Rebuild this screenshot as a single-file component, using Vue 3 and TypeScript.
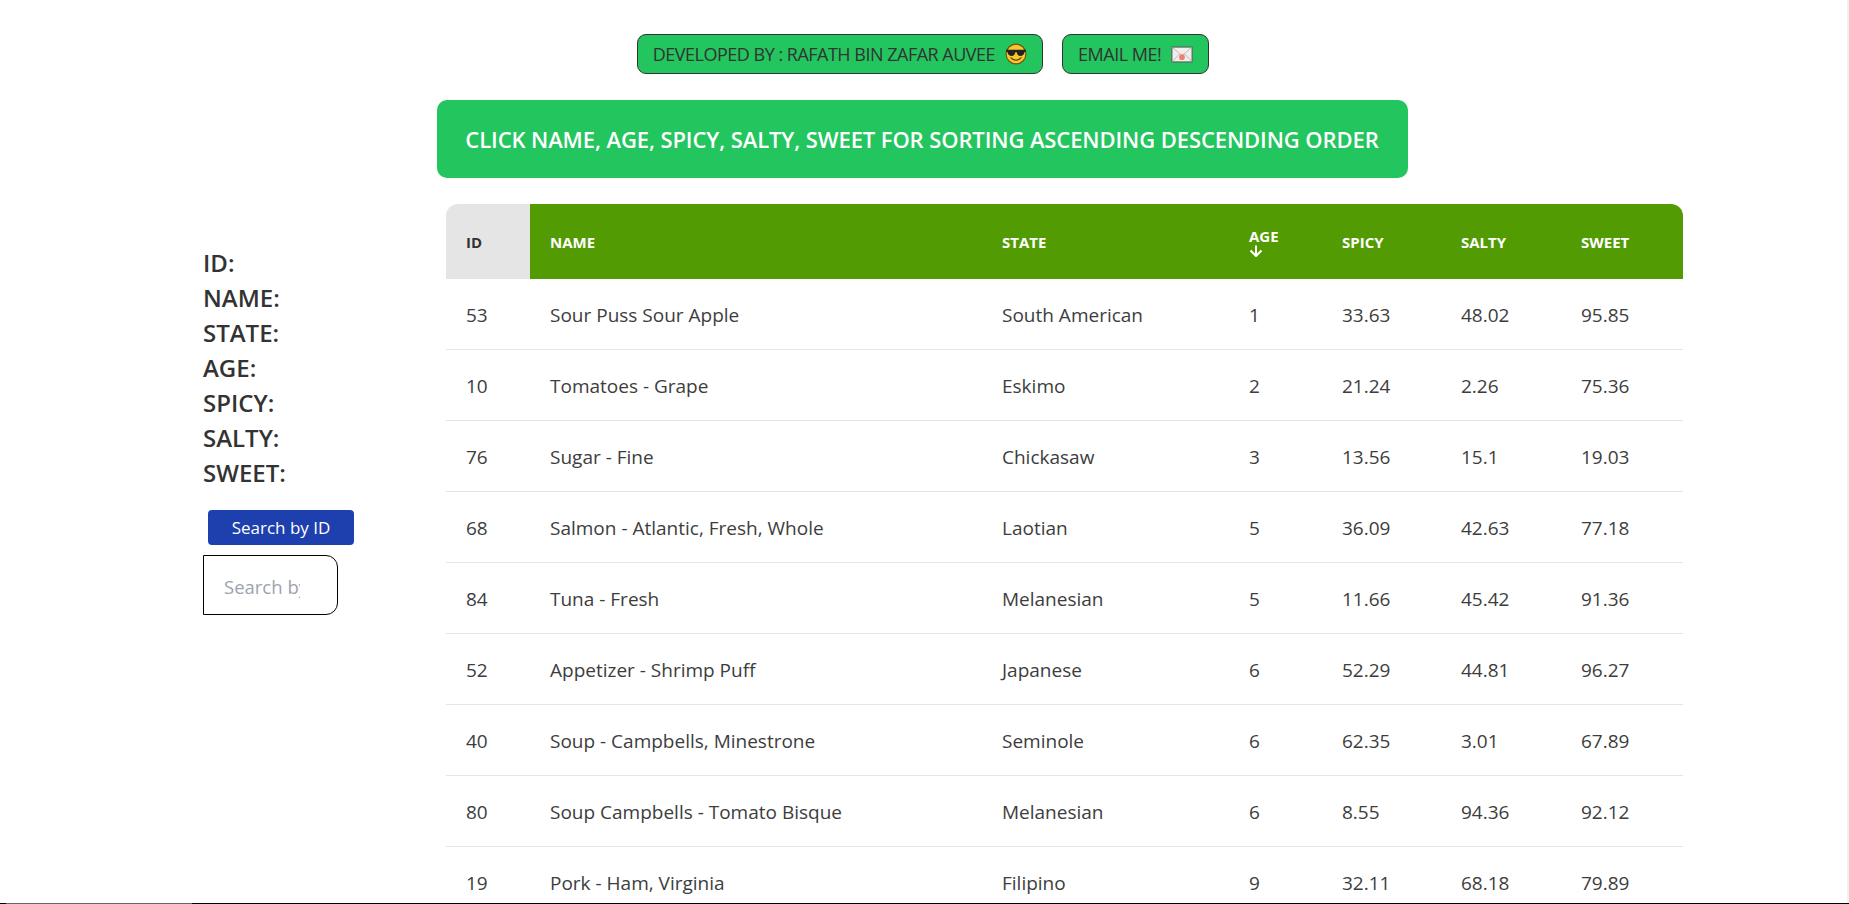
<template>
  <div class="page">
    <div class="top-links">
      <button class="link-btn">
        DEVELOPED BY : RAFATH BIN ZAFAR AUVEE
        <svg class="emoji" viewBox="0 0 20 20">
          <circle cx="10" cy="10" r="9" fill="#f9c62b" stroke="#6b5312" stroke-width="1" />
          <path d="M1 6.200h18v1.600l-1.200.4c-.4 2.600-2 3.600-3.800 3.600-2 0-3-1.400-3.400-3.400h-1.200C9 10.400 8 11.800 6 11.800c-1.800 0-3.400-1-3.800-3.600L1 7.800z" fill="#222" />
          <path d="M5.500 13.500c2.500 2.800 6.500 2.800 9 0" fill="none" stroke="#5a4510" stroke-width="1.200" stroke-linecap="round" />
        </svg>
      </button>
      <button class="link-btn">
        EMAIL ME!
        <svg class="emoji mail" viewBox="0 0 20 16">
          <rect x="0.500" y="1" width="19" height="14" fill="#f1efec" stroke="#5b5b5b" />
          <path d="M1 1.500l9 7.500 9-7.500M1 14.500l6.500-7M19 14.500l-6.500-7" fill="none" stroke="#b9b9b9" stroke-width="0.900" />
          <circle cx="10" cy="10.500" r="2.700" fill="#ef7f75" />
        </svg>
      </button>
    </div>

    <div class="banner-row">
      <div class="banner">CLICK NAME, AGE, SPICY, SALTY, SWEET FOR SORTING ASCENDING DESCENDING ORDER</div>
    </div>

    <div class="main">
      <aside class="side">
        <div class="labels">
          <div v-for="label in labels" :key="label">{{ label }}:</div>
        </div>
        <button class="search-btn">Search by ID</button>
        <input class="search-input" type="text" placeholder="Search by ID" />
      </aside>

      <table class="grid">
        <colgroup>
          <col v-for="w in colWidths" :key="w" :style="{ width: w + 'px' }" />
        </colgroup>
        <thead>
          <tr>
            <th class="th-id">ID</th>
            <th>NAME</th>
            <th>STATE</th>
            <th>
              AGE
              <svg class="sort-arrow" viewBox="0 0 14 12">
                <path d="M7 0.500v10.500M1.500 5.500L7 11l5.500-5.500" fill="none" stroke="#fff" stroke-width="2" />
              </svg>
            </th>
            <th>SPICY</th>
            <th>SALTY</th>
            <th>SWEET</th>
          </tr>
        </thead>
        <tbody>
          <tr v-for="row in rows" :key="row.id">
            <td>{{ row.id }}</td>
            <td>{{ row.name }}</td>
            <td>{{ row.state }}</td>
            <td>{{ row.age }}</td>
            <td>{{ row.spicy }}</td>
            <td>{{ row.salty }}</td>
            <td>{{ row.sweet }}</td>
          </tr>
        </tbody>
      </table>
    </div>

    <!-- window edge visible in the capture -->
    <div class="edge-right" />
    <div class="edge-bottom">
      <span class="edge-a" />
      <span class="edge-b" />
    </div>
  </div>
</template>

<script setup lang="ts">
interface Food {
  id: number;
  name: string;
  state: string;
  age: number;
  spicy: string;
  salty: string;
  sweet: string;
}

const labels = ['ID', 'NAME', 'STATE', 'AGE', 'SPICY', 'SALTY', 'SWEET'];
const colWidths = [84, 452, 247, 93, 119, 120, 122];

const rows: Food[] = [
  { id: 53, name: 'Sour Puss Sour Apple', state: 'South American', age: 1, spicy: '33.63', salty: '48.02', sweet: '95.85' },
  { id: 10, name: 'Tomatoes - Grape', state: 'Eskimo', age: 2, spicy: '21.24', salty: '2.26', sweet: '75.36' },
  { id: 76, name: 'Sugar - Fine', state: 'Chickasaw', age: 3, spicy: '13.56', salty: '15.1', sweet: '19.03' },
  { id: 68, name: 'Salmon - Atlantic, Fresh, Whole', state: 'Laotian', age: 5, spicy: '36.09', salty: '42.63', sweet: '77.18' },
  { id: 84, name: 'Tuna - Fresh', state: 'Melanesian', age: 5, spicy: '11.66', salty: '45.42', sweet: '91.36' },
  { id: 52, name: 'Appetizer - Shrimp Puff', state: 'Japanese', age: 6, spicy: '52.29', salty: '44.81', sweet: '96.27' },
  { id: 40, name: 'Soup - Campbells, Minestrone', state: 'Seminole', age: 6, spicy: '62.35', salty: '3.01', sweet: '67.89' },
  { id: 80, name: 'Soup Campbells - Tomato Bisque', state: 'Melanesian', age: 6, spicy: '8.55', salty: '94.36', sweet: '92.12' },
  { id: 19, name: 'Pork - Ham, Virginia', state: 'Filipino', age: 9, spicy: '32.11', salty: '68.18', sweet: '79.89' },
];
</script>

<style scoped>
.page {
  position: relative;
  height: 904px;
  overflow: hidden;
  font-family: "Open Sans", "Noto Sans", sans-serif;
  color: #3d3d3d;
  background: #fff;
}

.top-links {
  display: flex;
  justify-content: center;
  gap: 19px;
  padding: 34px 3px 0 0;
}

.link-btn {
  display: flex;
  align-items: center;
  gap: 10px;
  height: 40px;
  padding: 0 15px;
  border: 1px solid #333;
  border-radius: 9px;
  background: #22c55e;
  color: #333;
  font: inherit;
  font-size: 18px;
  letter-spacing: -0.5px;
  white-space: nowrap;
}

.emoji {
  width: 22px;
  height: 22px;
}

.mail {
  height: 17px;
}

.banner-row {
  display: flex;
  justify-content: center;
  padding: 26px 5px 0 0;
}

.banner {
  width: 971px;
  height: 78px;
  display: flex;
  align-items: center;
  justify-content: center;
  border-radius: 10px;
  background: #22c55e;
  color: #fff;
  font-size: 22px;
  font-weight: 600;
  letter-spacing: -0.1px;
  white-space: nowrap;
}

.main {
  display: flex;
  align-items: flex-start;
  padding: 26px 0 0 203px;
}

.side {
  width: 243px;
  padding-top: 41px;
  flex: none;
}

.labels {
  font-size: 24px;
  font-weight: 600;
  line-height: 35px;
  color: #333;
}

.search-btn {
  display: block;
  width: 146px;
  height: 35px;
  margin: 20px 0 0 5px;
  border: none;
  border-radius: 4px;
  background: #1e40af;
  color: #fff;
  font: inherit;
  font-size: 17px;
}

.search-input {
  display: block;
  box-sizing: border-box;
  width: 135px;
  height: 60px;
  margin-top: 10px;
  padding: 3px 37px 0 20px;
  border: 1px solid #000;
  border-radius: 0 12px 12px 0;
  outline: none;
  background: #fff;
  font: inherit;
  font-size: 18.5px;
}

.search-input::placeholder {
  color: #9ca3af;
}

.grid {
  width: 1237px;
  flex: none;
  table-layout: fixed;
  border-collapse: separate;
  border-spacing: 0;
  font-size: 19px;
}

.grid th {
  height: 75px;
  padding: 0 20px;
  background: #529b02;
  color: #fff;
  font-size: 15px;
  font-weight: 700;
  line-height: 18px;
  text-align: left;
  box-sizing: border-box;
}

.grid th:last-child {
  border-top-right-radius: 12px;
}

.grid th.th-id {
  background: #e5e5e5;
  color: #333;
  border-top-left-radius: 12px;
}

.sort-arrow {
  display: block;
  width: 14px;
  height: 12px;
}

.grid td {
  box-sizing: border-box;
  height: 71px;
  padding: 2px 20px 0;
  border-bottom: 1px solid #e5e5e5;
  white-space: nowrap;
}

.edge-right {
  position: absolute;
  top: 0;
  right: 0;
  bottom: 0;
  width: 2px;
  background: #f0f0f0;
}

.edge-bottom {
  position: absolute;
  left: 0;
  right: 0;
  bottom: 0;
  height: 1px;
  display: flex;
  background: #000;
}

.edge-a {
  width: 6px;
}

.edge-b {
  width: 186px;
  background: #666;
}
</style>

<style>
html,
body {
  margin: 0;
  overflow: hidden;
}
</style>
